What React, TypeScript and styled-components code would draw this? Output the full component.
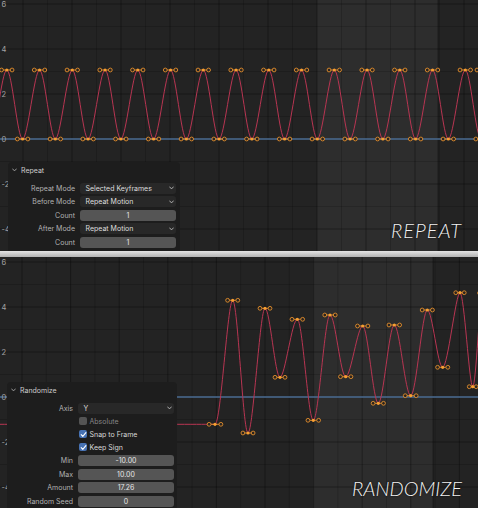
import React from 'react';
import styled, { createGlobalStyle } from 'styled-components';

const Global = createGlobalStyle`
  html, body { margin: 0; padding: 0; background: #1a1a1a; }
  body { font-family: Inter, "DejaVu Sans", sans-serif; }
`;

const Page = styled.main`
  width: 478px;
  height: 508px;
  display: flex;
  flex-direction: column;
  overflow: hidden;
`;

const GraphView = styled.section`
  position: relative;
  flex: none;
  height: 251px;
  overflow: hidden;
  background: #232323;
`;

const Divider = styled.div`
  flex: none;
  height: 6px;
  background: linear-gradient(#e4e4e4, #b2b2b2);
`;

const Canvas = styled.svg`
  display: block;
  width: 478px;
  height: 251px;
`;

const Caption = styled.div<{ $bottom: number; $spacing: number }>`
  position: absolute;
  right: 16px;
  bottom: ${(p) => p.$bottom}px;
  font-family: Lato, "Open Sans", sans-serif;
  font-style: italic;
  font-weight: 300;
  font-size: 20px;
  line-height: 1;
  letter-spacing: ${(p) => p.$spacing}px;
  color: #f2f2f2;
  text-shadow: 0 0 2px rgba(0, 0, 0, 0.9);
`;

const RedoPanel = styled.div<{ $left: number; $top: number; $width: number }>`
  position: absolute;
  left: ${(p) => p.$left}px;
  top: ${(p) => p.$top}px;
  bottom: 0;
  width: ${(p) => p.$width}px;
  box-sizing: border-box;
  padding-top: 2px;
  background: #1d1d1d;
  border-radius: 4px 4px 0 0;
  font-family: Inter, "DejaVu Sans", sans-serif;
  font-size: 7px;
  color: #b6b6b6;
`;

const PanelHeader = styled.div<{ $indent: number }>`
  display: flex;
  align-items: center;
  gap: 4px;
  height: 12px;
  padding-left: ${(p) => p.$indent}px;
  color: #cdcdcd;
`;

const PropGrid = styled.div<{ $labelW: number }>`
  display: grid;
  grid-template-columns: ${(p) => p.$labelW}px 96px;
  column-gap: 5px;
  row-gap: 2.5px;
  margin-top: 6.5px;
  align-items: center;
`;

const PropLabel = styled.span`
  grid-column: 1;
  text-align: right;
  line-height: 11px;
  white-space: nowrap;
  color: #b2b2b2;
`;

const Dropdown = styled.div`
  grid-column: 2;
  height: 11px;
  box-sizing: border-box;
  padding: 0 2.5px 0 5.5px;
  display: flex;
  align-items: center;
  justify-content: space-between;
  background: #282828;
  border-radius: 3px;
  color: #dedede;
  white-space: nowrap;
`;

const NumberField = styled.div`
  grid-column: 2;
  height: 11px;
  display: flex;
  align-items: center;
  justify-content: center;
  background: #555555;
  border-radius: 3px;
  color: #e6e6e6;
`;

const CheckRow = styled.div<{ $disabled?: boolean }>`
  grid-column: 2;
  height: 10.5px;
  display: flex;
  align-items: center;
  gap: 2.5px;
  padding-left: 1px;
  color: ${(p) => (p.$disabled ? '#858585' : '#d8d8d8')};
  white-space: nowrap;
`;

const CheckBox = styled.span<{ $on: boolean }>`
  width: 8px;
  height: 8px;
  border-radius: 2px;
  background: ${(p) => (p.$on ? '#4772b3' : '#545454')};
  display: flex;
  align-items: center;
  justify-content: center;
`;

const Chevron = ({ color = '#bdbdbd' }: { color?: string }) => (
  <svg width="5" height="4" viewBox="0 0 5 4">
    <path d="M0.6 0.9 L2.5 2.9 L4.4 0.9" fill="none" stroke={color} strokeWidth="0.9" strokeLinecap="round" strokeLinejoin="round" />
  </svg>
);

const Check = () => (
  <svg width="7" height="7" viewBox="0 0 7 7">
    <path d="M1.2 3.7 L2.8 5.3 L5.9 1.6" fill="none" stroke="#ffffff" strokeWidth="1.1" strokeLinecap="round" strokeLinejoin="round" />
  </svg>
);

type Pt = { x: number; y: number };
type KeyH = Pt & { h: number };

const ORANGE = '#e38e2c';
const CURVE = '#b83552';
const ZERO_LINE = '#4d6e94';

function withHandles(keys: Pt[]): KeyH[] {
  return keys.map((k, i) => {
    const dl = i > 0 ? k.x - keys[i - 1].x : Infinity;
    const dr = i < keys.length - 1 ? keys[i + 1].x - k.x : Infinity;
    const m = Math.min(dl, dr);
    return { ...k, h: Number.isFinite(m) ? m / 3 : 5.5 };
  });
}

function curvePath(keys: KeyH[]): string {
  let d = `M ${keys[0].x} ${keys[0].y}`;
  for (let i = 1; i < keys.length; i++) {
    const a = keys[i - 1];
    const b = keys[i];
    const ha = Math.min(a.h, (b.x - a.x) / 3);
    const hb = Math.min(b.h, (b.x - a.x) / 3);
    d += ` C ${a.x + ha} ${a.y} ${b.x - hb} ${b.y} ${b.x} ${b.y}`;
  }
  return d;
}

type GraphCfg = {
  x0: number;
  step: number;
  region: [number, number];
  zeroY: number;
  keys: Pt[];
  extra?: Pt[];
};

const W = 478;
const H = 251;
const UNIT = 22.5;

function Graph({ cfg }: { cfg: GraphCfg }) {
  const keys = withHandles(cfg.keys);
  const vLines: { x: number; major: boolean }[] = [];
  for (let k = -2; k < 24; k++) {
    const x = cfg.x0 + (k * cfg.step) / 2;
    if (x < -1 || x > W + 1) continue;
    vLines.push({ x, major: k % 2 === 0 });
  }
  const hLines: { y: number; major: boolean }[] = [];
  for (let v = 7; v >= -6; v--) {
    const y = cfg.zeroY - v * UNIT;
    if (y < -1 || y > H + 1) continue;
    hLines.push({ y, major: v % 2 === 0 });
  }
  const labels = [6, 4, 2, 0, -2, -4];
  const visible = keys.filter((k) => k.x > -10 && k.x < W + 10);
  return (
    <Canvas viewBox={`0 0 ${W} ${H}`}>
      <rect x="0" y="0" width={W} height={H} fill="#232323" />
      <rect x={cfg.region[0]} y="0" width={cfg.region[1] - cfg.region[0]} height={H} fill="#2d2d2d" />
      {vLines.map((l, i) => (
        <line key={`v${i}`} x1={l.x} y1="0" x2={l.x} y2={H} stroke={l.major ? 'rgba(0,0,0,0.32)' : 'rgba(0,0,0,0.16)'} strokeWidth="1" />
      ))}
      {hLines.map((l, i) => (
        <line key={`h${i}`} x1="0" y1={l.y} x2={W} y2={l.y} stroke={l.major ? 'rgba(0,0,0,0.32)' : 'rgba(0,0,0,0.15)'} strokeWidth="1" />
      ))}
      <line x1={cfg.region[1]} y1="0" x2={cfg.region[1]} y2={H} stroke="rgba(0,0,0,0.35)" strokeWidth="1" />
      <line x1="0" y1={cfg.zeroY} x2={W} y2={cfg.zeroY} stroke={ZERO_LINE} strokeWidth="1.4" />
      <path d={curvePath(keys)} fill="none" stroke={CURVE} strokeWidth="1" />
      {visible.map((k, i) => (
        <g key={`k${i}`}>
          <line x1={k.x - k.h} y1={k.y} x2={k.x + k.h} y2={k.y} stroke={ORANGE} strokeWidth="0.9" />
          <circle cx={k.x - k.h} cy={k.y} r="1.9" fill="#2a2420" stroke={ORANGE} strokeWidth="0.9" />
          <circle cx={k.x + k.h} cy={k.y} r="1.9" fill="#2a2420" stroke={ORANGE} strokeWidth="0.9" />
          <circle cx={k.x} cy={k.y} r="1.6" fill="#f99f32" />
        </g>
      ))}
      {(cfg.extra || []).map((p, i) => (
        <circle key={`e${i}`} cx={p.x} cy={p.y} r="1.9" fill="#2a2420" stroke={ORANGE} strokeWidth="0.9" />
      ))}
      {labels.map((v) => (
        <text
          key={`t${v}`}
          x="1.5"
          y={cfg.zeroY - v * UNIT}
          dominantBaseline="central"
          fontFamily="Inter, 'DejaVu Sans', sans-serif"
          fontSize="7.5"
          fill="#a3a3a3"
        >
          {String(v)}
        </text>
      ))}
    </Canvas>
  );
}

const topKeys: Pt[] = [];
for (let i = -1; i <= 15; i++) {
  const px = 6.8 + 32.75 * i;
  if (i >= 0) topKeys.push({ x: px, y: 70 });
  topKeys.push({ x: px + 15.8, y: 139 });
}
topKeys.push({ x: 6.8 + 32.75 * 16, y: 70 });
topKeys.sort((a, b) => a.x - b.x);

const topCfg: GraphCfg = {
  x0: 23,
  step: 49,
  region: [317, 438],
  zeroY: 139,
  keys: topKeys,
  extra: [{ x: 477, y: 70 }],
};

const bottomCfg: GraphCfg = {
  x0: 22,
  step: 48.6,
  region: [313, 433],
  zeroY: 140,
  keys: [
    { x: -40, y: 167.3 },
    { x: 215, y: 167.3 },
    { x: 232.7, y: 43.3 },
    { x: 248, y: 176 },
    { x: 265, y: 51.3 },
    { x: 280, y: 120.3 },
    { x: 297.3, y: 62.3 },
    { x: 313.3, y: 163.3 },
    { x: 330, y: 58 },
    { x: 345.7, y: 119.7 },
    { x: 362.7, y: 69 },
    { x: 378.3, y: 146.3 },
    { x: 394.3, y: 68 },
    { x: 410.7, y: 138.7 },
    { x: 427.3, y: 53 },
    { x: 442.7, y: 110.3 },
    { x: 460, y: 35.7 },
    { x: 472.7, y: 129.7 },
    { x: 483, y: 36 },
  ],
};

type Prop =
  | { kind: 'enum'; label: string; value: string }
  | { kind: 'num'; label: string; value: string }
  | { kind: 'check'; label: string; on: boolean; disabled?: boolean };

function PropRows({ props }: { props: Prop[] }) {
  return (
    <>
      {props.map((p, i) => {
        if (p.kind === 'check') {
          return (
            <CheckRow key={i} $disabled={p.disabled}>
              <CheckBox $on={p.on}>{p.on ? <Check /> : null}</CheckBox>
              <span>{p.label}</span>
            </CheckRow>
          );
        }
        return (
          <React.Fragment key={i}>
            <PropLabel>{p.label}</PropLabel>
            {p.kind === 'enum' ? (
              <Dropdown>
                <span>{p.value}</span>
                <Chevron />
              </Dropdown>
            ) : (
              <NumberField>{p.value}</NumberField>
            )}
          </React.Fragment>
        );
      })}
    </>
  );
}

const repeatProps: Prop[] = [
  { kind: 'enum', label: 'Repeat Mode', value: 'Selected Keyframes' },
  { kind: 'enum', label: 'Before Mode', value: 'Repeat Motion' },
  { kind: 'num', label: 'Count', value: '1' },
  { kind: 'enum', label: 'After Mode', value: 'Repeat Motion' },
  { kind: 'num', label: 'Count', value: '1' },
];

const randomProps: Prop[] = [
  { kind: 'enum', label: 'Axis', value: 'Y' },
  { kind: 'check', label: 'Absolute', on: false, disabled: true },
  { kind: 'check', label: 'Snap to Frame', on: true },
  { kind: 'check', label: 'Keep Sign', on: true },
  { kind: 'num', label: 'Min', value: '-10.00' },
  { kind: 'num', label: 'Max', value: '10.00' },
  { kind: 'num', label: 'Amount', value: '17.26' },
  { kind: 'num', label: 'Random Seed', value: '0' },
];

export default function App() {
  return (
    <>
      <Global />
      <Page>
        <GraphView>
          <Graph cfg={topCfg} />
          <RedoPanel $left={8} $top={162} $width={172}>
            <PanelHeader $indent={4}>
              <Chevron color="#a8a8a8" />
              <span>Repeat</span>
            </PanelHeader>
            <PropGrid $labelW={67}>
              <PropRows props={repeatProps} />
            </PropGrid>
          </RedoPanel>
          <Caption $bottom={11.5} $spacing={1}>REPEAT</Caption>
        </GraphView>
        <Divider />
        <GraphView>
          <Graph cfg={bottomCfg} />
          <RedoPanel $left={7} $top={125} $width={170}>
            <PanelHeader $indent={4}>
              <Chevron color="#a8a8a8" />
              <span>Randomize</span>
            </PanelHeader>
            <PropGrid $labelW={66}>
              <PropRows props={randomProps} />
            </PropGrid>
          </RedoPanel>
          <Caption $bottom={10.5} $spacing={0}>RANDOMIZE</Caption>
        </GraphView>
      </Page>
    </>
  );
}
